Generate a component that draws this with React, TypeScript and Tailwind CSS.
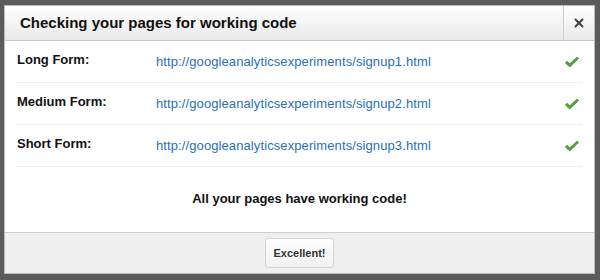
import { X } from "lucide-react";

const rows = [
    { label: "Long Form:", url: "http://googleanalyticsexperiments/signup1.html" },
    { label: "Medium Form:", url: "http://googleanalyticsexperiments/signup2.html" },
    { label: "Short Form:", url: "http://googleanalyticsexperiments/signup3.html" },
];

const Check = () => (
    <svg width="16" height="13" viewBox="0 0 18 14">
        <path d="M1.5 7.5 L6.5 12 L16.5 2.5 L14.5 1 L6.5 8.5 L3.5 5.5 Z" fill="#4ea63a" stroke="#3d8f2c" strokeWidth="0.8" strokeLinejoin="round" />
    </svg>
);

export default function App() {
    return (
        <div className="w-[600px] h-[280px] bg-[#5b5b5b] pt-[5px] pl-[4px] pr-[5px] pb-[6px] font-['Liberation_Sans',Arial,sans-serif]">
            <div className="h-full flex flex-col bg-white border border-[#bcbcbc]">
                {/* header */}
                <div className="h-[35px] flex border-b border-[#c8c8c8] bg-gradient-to-b from-white to-[#e9e9e9]">
                    <div className="flex-1 flex items-center pl-[15px] text-[15px] font-bold text-[#111]">
                        Checking your pages for working code
                    </div>
                    <div className="w-[31px] flex items-center justify-center border-l border-[#cfcfcf]">
                        <X className="w-[14px] h-[14px] text-[#444]" strokeWidth={3.5} />
                    </div>
                </div>

                {/* rows */}
                <div className="px-[12px]">
                    {rows.map(row => (
                        <div key={row.label} className="h-[42px] flex items-center border-b border-dotted border-[#e2e2e2]">
                            <div className="w-[139px] text-[13px] font-bold text-[#111] -mt-[4px]">
                                {row.label}
                            </div>
                            <a className="flex-1 text-[13px] tracking-[0.1px] text-[#2a6fb8]" href="#">
                                {row.url}
                            </a>
                            <div className="w-[18px] mt-[1px]">
                                <Check />
                            </div>
                        </div>
                    ))}
                </div>

                <div className="flex-1 flex items-center justify-center text-[13px] font-bold text-[#111] pb-[2px]">
                    All your pages have working code!
                </div>

                {/* footer */}
                <div className="h-[41px] flex items-center justify-center bg-[#efefef] border-t border-[#cdcdcd]">
                    <button className="h-[30px] px-[8px] rounded-[3px] border border-[#d4d4d4] bg-gradient-to-b from-white to-[#f1f1f1] text-[11px] font-bold text-[#333]">
                        Excellent!
                    </button>
                </div>
            </div>
        </div>
    );
}
